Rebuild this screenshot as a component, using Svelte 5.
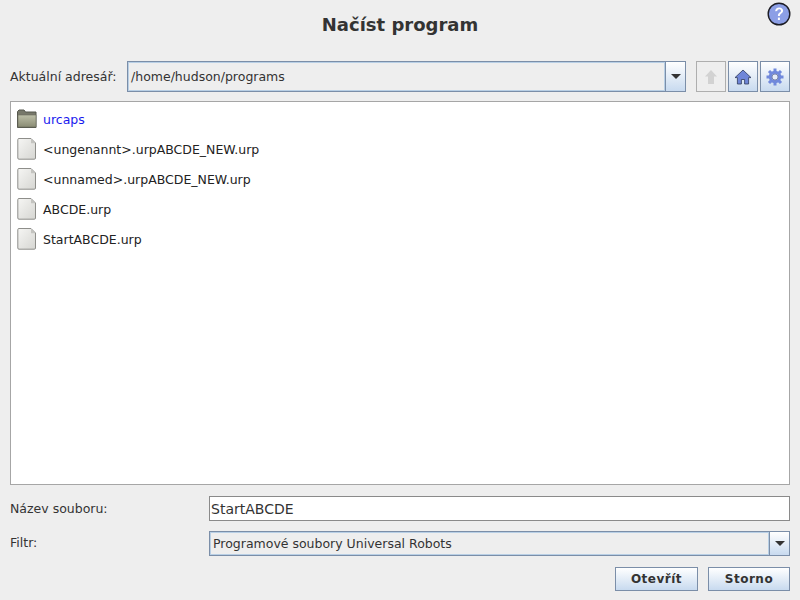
<script>
  const files = [
    { name: "<ungenannt>.urpABCDE_NEW.urp" },
    { name: "<unnamed>.urpABCDE_NEW.urp" },
    { name: "ABCDE.urp" },
    { name: "StartABCDE.urp" }
  ];
</script>

{#snippet arrow()}
  <span class="arrow-box"><span class="arrow"></span></span>
{/snippet}

<div class="dialog">
  <header class="title-bar">
    <h1>Načíst program</h1>
    <svg class="help" width="24" height="24" viewBox="0 0 24 24">
      <circle cx="12" cy="12" r="10.8" fill="#8c9fe6" stroke="#1c1c24" stroke-width="1.4" />
      <path d="M8.2 9.2c0-2.4 1.7-3.8 4-3.8 2.300 0 3.900 1.300 3.900 3.200 0 1.600-.9 2.400-2 3.200-.9.700-1.200 1.100-1.200 2.200h-2c0-1.700.5-2.500 1.700-3.400.9-.7 1.400-1.100 1.400-1.900 0-.9-.7-1.500-1.800-1.500-1.200 0-1.900.7-1.900 1.800z" fill="#fff" />
      <rect x="10.900" y="15.600" width="2" height="2.400" fill="#fff" />
    </svg>
  </header>

  <div class="dir-row">
    <span class="label dir-label">Aktuální adresář:</span>
    <div class="combo dir-combo">
      <span class="combo-text">/home/hudson/programs</span>
      {@render arrow()}
    </div>
    <div class="tools">
      <button class="tool disabled" aria-label="Nahoru">
        <svg width="16" height="18" viewBox="0 0 16 18"><path d="M8 2l6 6.500h-3V16H5V8.500H2z" fill="#d2d2d2" /></svg>
      </button>
      <button class="tool" aria-label="Domů">
        <svg width="18" height="18" viewBox="0 0 18 18">
          <path d="M9 2L1 9.600h2.400V16h4v-4.500h3.200V16h4V9.600H17z" fill="#6f86d8" stroke="#2f3a5c" stroke-width=".8" stroke-linejoin="round" />
        </svg>
      </button>
      <button class="tool" aria-label="Nastavení">
        <svg width="20" height="20" viewBox="0 0 20 20">
          <circle cx="10" cy="10" r="4.700" fill="none" stroke="#7189dc" stroke-width="3" />
          <g stroke="#7189dc" stroke-width="3">
            <path d="M10 1.500v3M10 15.500v3M1.500 10h3M15.500 10h3M4 4l2.100 2.100M13.900 13.900L16 16M4 16l2.100-2.100M13.900 6.100L16 4" />
          </g>
          <circle cx="10" cy="10" r="3" fill="#e6edf8" stroke="#3f4c78" stroke-width=".6" />
        </svg>
      </button>
    </div>
  </div>

  <div class="list">
    <div class="item">
      <svg width="20" height="20" viewBox="0 0 20 20">
        <defs>
          <linearGradient id="folder" x1="0" y1="0" x2="0" y2="1">
            <stop offset="0" stop-color="#bdbfa8" />
            <stop offset="1" stop-color="#8a8c74" />
          </linearGradient>
        </defs>
        <path d="M.5 18.500V2.500l1.500-1.500h5l1.500 2h10.500v15.500z" fill="#77786a" stroke="#55564c" />
        <rect x="1" y="6" width="18" height="12" fill="url(#folder)" stroke="#6a6b5c" stroke-width=".6" />
      </svg>
      <span class="folder-name">urcaps</span>
    </div>
    {#each files as file}
      <div class="item">
        <svg width="20" height="22" viewBox="0 0 20 22">
          <defs>
            <linearGradient id="page" x1="0" y1="0" x2="1" y2="1">
              <stop offset="0" stop-color="#f6f6f4" />
              <stop offset="1" stop-color="#d6d6d2" />
            </linearGradient>
          </defs>
          <path d="M2 .5h12l4.500 4.500v15a1.200 1.200 0 0 1-1.200 1.200H2A1.200 1.200 0 0 1 .8 20V1.700A1.200 1.200 0 0 1 2 .5z" fill="url(#page)" stroke="#8e8e8a" />
          <path d="M14 .8v4.400h4.200z" fill="#c4c4c0" />
        </svg>
        <span>{file.name}</span>
      </div>
    {/each}
  </div>

  <div class="form-row name-row">
    <span class="label">Název souboru:</span>
    <div class="input">StartABCDE</div>
  </div>

  <div class="form-row filter-row">
    <span class="label">Filtr:</span>
    <div class="combo filter-combo">
      <span class="combo-text">Programové soubory Universal Robots</span>
      {@render arrow()}
    </div>
  </div>

  <div class="actions">
    <button class="action">Otevřít</button>
    <button class="action">Storno</button>
  </div>
</div>

<style>
  :global(body) {
    background: #eeeeee;
  }

  .dialog {
    width: 800px;
    height: 600px;
    box-sizing: border-box;
    padding: 0 10px;
    background: #eeeeee;
    font-family: "DejaVu Sans", sans-serif;
    font-size: 12px;
    color: #333333;
    overflow: hidden;
  }

  .title-bar {
    position: relative;
    height: 61px;
  }

  h1 {
    margin: 0;
    padding-top: 14px;
    text-align: center;
    font-size: 18px;
    line-height: 22px;
    font-weight: bold;
    color: #333333;
  }

  .help {
    position: absolute;
    top: 2px;
    right: -1px;
  }

  .dir-row {
    display: flex;
    align-items: center;
    height: 31px;
  }

  .dir-label {
    width: 117px;
    flex: none;
  }

  .combo {
    display: flex;
    box-sizing: border-box;
    border: 1px solid #7b8ea8;
    background: #eeeeee;
  }

  .combo-text {
    flex: 1;
    display: flex;
    align-items: center;
    padding-left: 2px;
    border: 1px solid #b8cfe5;
    font-size: 12.500px;
    color: #333333;
  }

  .arrow-box {
    flex: none;
    width: 19px;
    display: flex;
    align-items: center;
    justify-content: center;
    border-left: 1px solid #7b8ea8;
    background: linear-gradient(#ffffff, #c8daef);
  }

  .arrow {
    width: 0;
    height: 0;
    border-left: 5px solid transparent;
    border-right: 5px solid transparent;
    border-top: 5px solid #333333;
  }

  .dir-combo {
    width: 559px;
    height: 31px;
  }

  .tools {
    display: flex;
    gap: 2px;
    margin-left: 10px;
  }

  .tool {
    width: 30px;
    height: 31px;
    padding: 0;
    display: flex;
    align-items: center;
    justify-content: center;
    box-sizing: border-box;
    border: 1px solid #7b8ea8;
    background: linear-gradient(#ffffff, #c8daef);
  }

  .tool.disabled {
    border-color: #aeaeae;
    background: #eeeeee;
  }

  .list {
    box-sizing: border-box;
    width: 780px;
    height: 384px;
    margin-top: 9px;
    padding-top: 2px;
    background: #ffffff;
    border: 1px solid #a6a6a6;
  }

  .item {
    display: flex;
    align-items: center;
    gap: 6px;
    height: 30px;
    padding-left: 6px;
    font-size: 12.500px;
    color: #222222;
  }

  .item svg {
    flex: none;
    width: 20px;
  }

  .folder-name {
    color: #1a1aee;
  }

  .label {
    font-size: 12.500px;
    color: #333333;
  }

  .form-row {
    display: flex;
    align-items: center;
  }

  .form-row .label {
    width: 199px;
    flex: none;
  }

  .name-row {
    height: 25px;
    margin-top: 11px;
  }

  .input {
    box-sizing: border-box;
    width: 581px;
    height: 25px;
    display: flex;
    align-items: center;
    padding-left: 1px;
    background: #ffffff;
    border: 1px solid #8a8a8a;
    font-size: 14px;
    color: #333333;
  }

  .filter-row {
    height: 25px;
    margin-top: 10px;
  }

  .filter-combo {
    width: 581px;
    height: 25px;
  }

  .filter-row .label {
    margin-top: -2px;
  }

  .actions {
    display: flex;
    justify-content: flex-end;
    gap: 10px;
    margin-top: 11px;
  }

  .action {
    box-sizing: border-box;
    width: 83px;
    height: 24px;
    padding: 0;
    border: 1px solid #7b8ea8;
    background: linear-gradient(#ffffff, #c8daef);
    font-family: "DejaVu Sans", sans-serif;
    font-size: 12px;
    font-weight: bold;
    letter-spacing: .5px;
    color: #333333;
  }

  .action:last-child {
    width: 82px;
  }
</style>
